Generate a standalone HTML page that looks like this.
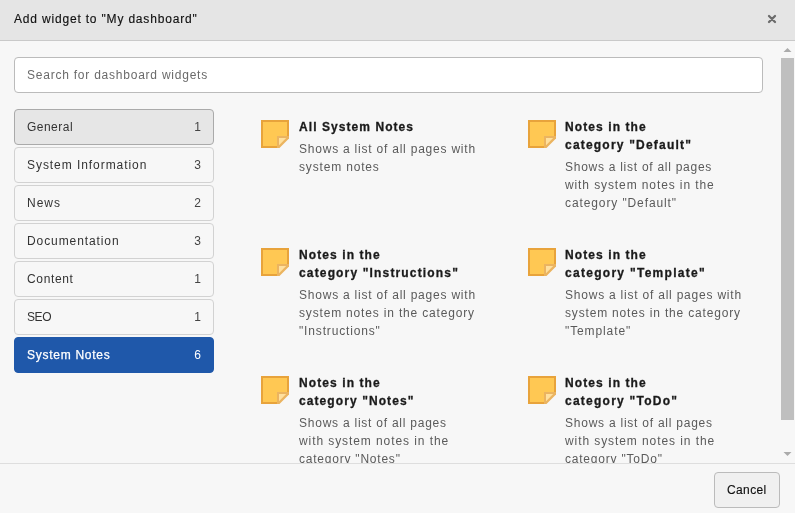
<!DOCTYPE html>
<html><head><meta charset="utf-8">
<style>
*{box-sizing:border-box;margin:0;padding:0}
html,body{width:795px;height:513px;overflow:hidden;background:#f7f7f7;font-family:"Liberation Sans",sans-serif;font-size:12px;color:#1a1a1a}
.hdr{position:absolute;left:0;top:0;width:795px;height:41px;background:#e5e5e5;border-bottom:1px solid #c9c9c9}
.close{position:absolute;left:766px;top:13px}
.search{position:absolute;left:14px;top:57px;width:749px;height:36px;background:#fff;border:1px solid #bbb;border-radius:4px}
.nav{position:absolute;left:14px;width:200px;height:36px;border:1px solid #d2d2d2;border-radius:4px;background:#f7f7f7}
.nav.hov{background:#e6e6e6;border-color:#aaa}
.nav.act{background:#1f58aa;border-color:#1f58aa}
.cnt{position:absolute;top:10px;width:20px;text-align:right;left:180.5px}
.t{position:absolute;line-height:14px;white-space:nowrap;will-change:transform}
.n{color:#111;-webkit-text-stroke:0.15px #111}
.ph{color:#6a6a6a}
.nl{color:#333}
.nl.w{color:#fff;-webkit-text-stroke:0.25px #fff}
.wt{font-weight:bold;color:#1a1a1a;-webkit-text-stroke:0.3px #1a1a1a}
.wd{color:#5a5a5a}
.clip{position:absolute;left:0;top:41px;width:780px;height:422px;overflow:hidden}
.clip .t, .clip .ico{margin-top:-41px}
.ftr{position:absolute;left:0;top:463px;width:795px;height:50px;background:#f7f7f7;border-top:1px solid #dedede}
.btn{position:absolute;left:714px;top:472px;width:66px;height:36px;border:1px solid #bbb;border-radius:4px;background:#f0f0f0}
.ico{position:absolute}
.sb-thumb{position:absolute;left:781px;top:58px;width:13px;height:362px;background:#bfbfbf}
.arr{position:absolute;width:0;height:0;border-left:4px solid transparent;border-right:4px solid transparent}
</style></head><body>
<div class="hdr"></div>
<svg class="close" width="12" height="12" viewBox="0 0 12 12"><path d="M3 3L9 9M9 3L3 9" stroke="#6c6c6c" stroke-width="2.3" stroke-linecap="round"/></svg>
<div class="search"></div>

<div class="nav hov" style="top:109px"></div>
<div class="nav" style="top:147px"></div>
<div class="nav" style="top:185px"></div>
<div class="nav" style="top:223px"></div>
<div class="nav" style="top:261px"></div>
<div class="nav" style="top:299px"></div>
<div class="nav act" style="top:337px"></div>
<div class="clip">
<svg class="ico" style="left:261px;top:120px" width="28" height="28" viewBox="0 0 28 28"><path d="M0 0H28V16H16V28H0Z" fill="#e8a33b"/><path d="M2 2H26V16H16V26H2Z" fill="#ffc853"/><path d="M16 16H28V18.5L18.5 28H16Z" fill="#ebb460"/><path d="M18 18H25.2L18 25.2Z" fill="#ffe09e"/></svg>
<svg class="ico" style="left:528px;top:120px" width="28" height="28" viewBox="0 0 28 28"><path d="M0 0H28V16H16V28H0Z" fill="#e8a33b"/><path d="M2 2H26V16H16V26H2Z" fill="#ffc853"/><path d="M16 16H28V18.5L18.5 28H16Z" fill="#ebb460"/><path d="M18 18H25.2L18 25.2Z" fill="#ffe09e"/></svg>
<svg class="ico" style="left:261px;top:248px" width="28" height="28" viewBox="0 0 28 28"><path d="M0 0H28V16H16V28H0Z" fill="#e8a33b"/><path d="M2 2H26V16H16V26H2Z" fill="#ffc853"/><path d="M16 16H28V18.5L18.5 28H16Z" fill="#ebb460"/><path d="M18 18H25.2L18 25.2Z" fill="#ffe09e"/></svg>
<svg class="ico" style="left:528px;top:248px" width="28" height="28" viewBox="0 0 28 28"><path d="M0 0H28V16H16V28H0Z" fill="#e8a33b"/><path d="M2 2H26V16H16V26H2Z" fill="#ffc853"/><path d="M16 16H28V18.5L18.5 28H16Z" fill="#ebb460"/><path d="M18 18H25.2L18 25.2Z" fill="#ffe09e"/></svg>
<svg class="ico" style="left:261px;top:376px" width="28" height="28" viewBox="0 0 28 28"><path d="M0 0H28V16H16V28H0Z" fill="#e8a33b"/><path d="M2 2H26V16H16V26H2Z" fill="#ffc853"/><path d="M16 16H28V18.5L18.5 28H16Z" fill="#ebb460"/><path d="M18 18H25.2L18 25.2Z" fill="#ffe09e"/></svg>
<svg class="ico" style="left:528px;top:376px" width="28" height="28" viewBox="0 0 28 28"><path d="M0 0H28V16H16V28H0Z" fill="#e8a33b"/><path d="M2 2H26V16H16V26H2Z" fill="#ffc853"/><path d="M16 16H28V18.5L18.5 28H16Z" fill="#ebb460"/><path d="M18 18H25.2L18 25.2Z" fill="#ffe09e"/></svg>
<div class="t wt" style="left:299.0px;top:119.8px;letter-spacing:1.064px;">All System Notes</div>
<div class="t wd" style="left:299.0px;top:141.8px;letter-spacing:0.782px;">Shows a list of all pages with</div>
<div class="t wd" style="left:299.0px;top:159.8px;letter-spacing:0.833px;">system notes</div>
<div class="t wt" style="left:565.0px;top:119.8px;letter-spacing:1.091px;">Notes in the</div>
<div class="t wt" style="left:565.0px;top:137.8px;letter-spacing:1.202px;">category "Default"</div>
<div class="t wd" style="left:565.0px;top:159.8px;letter-spacing:0.733px;">Shows a list of all pages</div>
<div class="t wd" style="left:565.0px;top:177.8px;letter-spacing:0.896px;">with system notes in the</div>
<div class="t wd" style="left:565.0px;top:195.8px;letter-spacing:0.892px;">category "Default"</div>
<div class="t wt" style="left:299.0px;top:247.8px;letter-spacing:1.091px;">Notes in the</div>
<div class="t wt" style="left:299.0px;top:265.8px;letter-spacing:1.155px;">category "Instructions"</div>
<div class="t wd" style="left:299.0px;top:287.8px;letter-spacing:0.781px;">Shows a list of all pages with</div>
<div class="t wd" style="left:299.0px;top:305.8px;letter-spacing:0.824px;">system notes in the category</div>
<div class="t wd" style="left:299.0px;top:323.8px;letter-spacing:0.846px;">"Instructions"</div>
<div class="t wt" style="left:565.0px;top:247.8px;letter-spacing:1.091px;">Notes in the</div>
<div class="t wt" style="left:565.0px;top:265.8px;letter-spacing:1.287px;">category "Template"</div>
<div class="t wd" style="left:565.0px;top:287.8px;letter-spacing:0.781px;">Shows a list of all pages with</div>
<div class="t wd" style="left:565.0px;top:305.8px;letter-spacing:0.824px;">system notes in the category</div>
<div class="t wd" style="left:565.0px;top:323.8px;letter-spacing:0.889px;">"Template"</div>
<div class="t wt" style="left:299.0px;top:375.8px;letter-spacing:1.091px;">Notes in the</div>
<div class="t wt" style="left:299.0px;top:393.8px;letter-spacing:1.088px;">category "Notes"</div>
<div class="t wd" style="left:299.0px;top:415.8px;letter-spacing:0.762px;">Shows a list of all pages</div>
<div class="t wd" style="left:299.0px;top:433.8px;letter-spacing:0.917px;">with system notes in the</div>
<div class="t wd" style="left:299.0px;top:451.8px;letter-spacing:0.779px;">category "Notes"</div>
<div class="t wt" style="left:565.0px;top:375.8px;letter-spacing:1.091px;">Notes in the</div>
<div class="t wt" style="left:565.0px;top:393.8px;letter-spacing:1.243px;">category "ToDo"</div>
<div class="t wd" style="left:565.0px;top:415.8px;letter-spacing:0.762px;">Shows a list of all pages</div>
<div class="t wd" style="left:565.0px;top:433.8px;letter-spacing:0.917px;">with system notes in the</div>
<div class="t wd" style="left:565.0px;top:451.8px;letter-spacing:0.786px;">category "ToDo"</div>
</div>
<div class="t n" style="left:13.9px;top:11.6px;letter-spacing:0.819px;">Add widget to "My dashboard"</div>
<div class="t ph" style="left:27.0px;top:67.7px;letter-spacing:0.769px;">Search for dashboard widgets</div>
<div class="t nl" style="left:26.9px;top:119.6px;letter-spacing:0.480px;">General</div>
<div class="t nl" style="left:26.9px;top:157.6px;letter-spacing:0.941px;">System Information</div>
<div class="t nl" style="left:26.9px;top:195.6px;letter-spacing:0.960px;">News</div>
<div class="t nl" style="left:26.9px;top:233.6px;letter-spacing:0.907px;">Documentation</div>
<div class="t nl" style="left:26.9px;top:271.6px;letter-spacing:0.647px;">Content</div>
<div class="t nl" style="left:26.9px;top:309.6px;letter-spacing:-0.440px;">SEO</div>
<div class="t nl w" style="left:26.9px;top:347.6px;letter-spacing:0.727px;">System Notes</div>
<div class="t" style="left:180.5px;top:119.6px;width:20px;text-align:right;color:#444">1</div>
<div class="t" style="left:180.5px;top:157.6px;width:20px;text-align:right;color:#444">3</div>
<div class="t" style="left:180.5px;top:195.6px;width:20px;text-align:right;color:#444">2</div>
<div class="t" style="left:180.5px;top:233.6px;width:20px;text-align:right;color:#444">3</div>
<div class="t" style="left:180.5px;top:271.6px;width:20px;text-align:right;color:#444">1</div>
<div class="t" style="left:180.5px;top:309.6px;width:20px;text-align:right;color:#444">1</div>
<div class="t" style="left:180.5px;top:347.6px;width:20px;text-align:right;color:#fff">6</div>
<div class="ftr"></div><div class="btn"></div>
<div class="sb-thumb"></div><svg style="position:absolute;left:780px;top:44px" width="15" height="12"><path d="M3.5 8H11.5L7.5 4Z" fill="#ababab"/></svg><svg style="position:absolute;left:780px;top:448px" width="15" height="12"><path d="M3.5 4H11.5L7.5 8Z" fill="#ababab"/></svg>
<div class="t n" style="left:727.2px;top:483.0px;letter-spacing:0.380px;">Cancel</div>
</body></html>
